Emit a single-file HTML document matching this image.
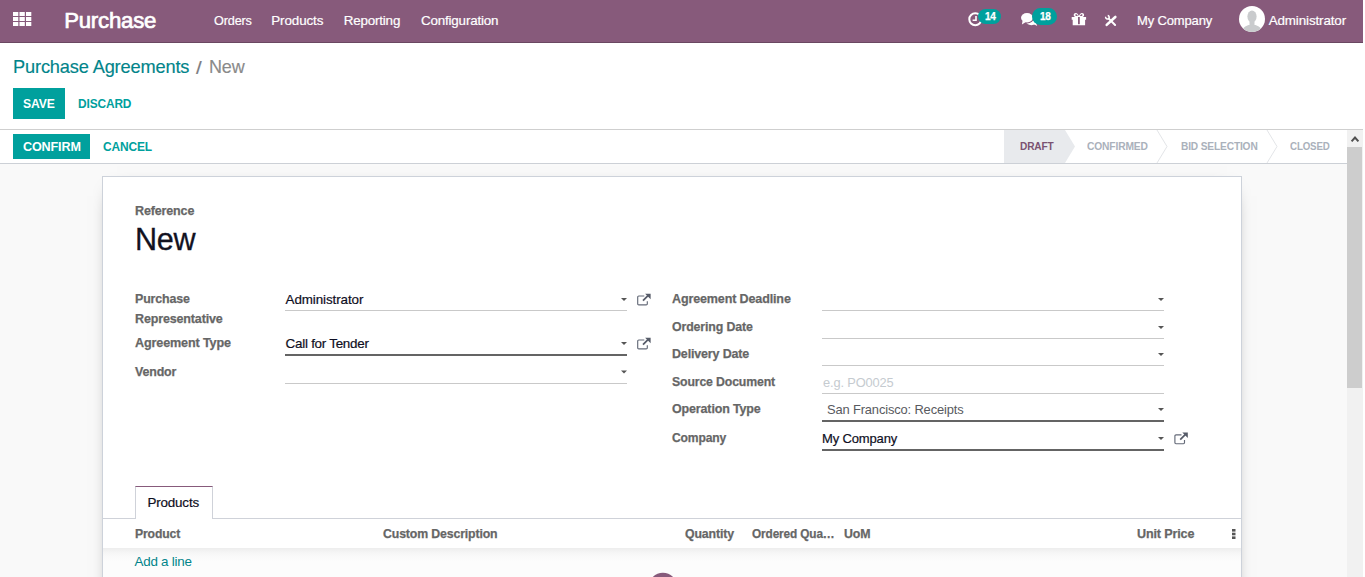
<!DOCTYPE html>
<html lang="en">
<head>
<meta charset="utf-8">
<title>Purchase Agreements - New</title>
<style>
*{box-sizing:border-box}
html,body{margin:0;padding:0;background:#fff;overflow:hidden}
body{font-family:"Liberation Sans",sans-serif;font-size:13px;color:#1f2128}
#app{position:relative;width:1363px;height:577px;overflow:hidden;background:#f9f9f9}
.t{position:absolute;white-space:nowrap;line-height:20px;margin:0;padding:0;font-weight:400;font-family:inherit;transform-origin:0 50%;display:block;text-decoration:none;cursor:default}
svg{position:absolute;display:block;overflow:visible}
/* navbar */
.navbar{position:absolute;left:0;top:0;width:1363px;height:43px;background:#875a7b;border-bottom:1px solid #6a4761}
.badge{position:absolute;background:#00a09d;border-radius:9px}
.avatar{position:absolute;left:1239px;top:6px;width:26px;height:26px;border-radius:50%;background:#fff;overflow:hidden}
/* control panel */
.cp{position:absolute;left:0;top:43px;width:1363px;height:87px;background:#fff;border-bottom:1px solid #cfcfcf}
.btn{position:absolute;background:#00a09d}
/* status bar */
.sb{position:absolute;left:0;top:130px;width:1347px;height:34px;background:#fff;border-bottom:1px solid #ccd0d6}
.st-active{position:absolute;left:1004px;top:130px;width:61px;height:33px;background:#e8eaed}
/* sheet */
.sheet{position:absolute;left:102px;top:176px;width:1140px;height:460px;background:#fff;border:1px solid #cdd2da;box-shadow:0 5px 20px -15px #000}
.ul{position:absolute;height:1px;background:#c9c9c9}
.ul.req{height:2px;background:#646464}
.tab{position:absolute;left:135px;top:486px;width:78px;height:33px;background:#fff;border:1px solid #cfd2d9;border-top:1px solid #875a7b;border-bottom:0}
.tabline{position:absolute;left:103px;top:518px;width:1138px;height:1px;background:#cfd2d9}
.thead{position:absolute;left:103px;top:519px;width:1138px;height:29px;background:#fff}
.tbody{position:absolute;left:103px;top:548px;width:1138px;height:40px;background:linear-gradient(#ededed 0,#f1f1f1 2px,#f6f6f6 5px,#fafafa 9px,#fcfcfc 13px)}
/* scrollbar */
.sbar{position:absolute;left:1347px;top:130px;width:16px;height:447px;background:#f1f1f1}
.thumb{position:absolute;left:0;top:17px;width:15px;height:241px;background:#cdcdcd}
</style>
</head>
<body>
<div id="app">

  <nav class="navbar">
    <svg style="left:12.9px;top:12px" width="19" height="14" viewBox="0 0 19 14"><g fill="#fff"><rect x="0" y="0" width="5.3" height="4"/><rect x="6.5" y="0" width="5.3" height="4"/><rect x="13" y="0" width="5.3" height="4"/><rect x="0" y="5" width="5.3" height="4"/><rect x="6.5" y="5" width="5.3" height="4"/><rect x="13" y="5" width="5.3" height="4"/><rect x="0" y="10" width="5.3" height="4"/><rect x="6.5" y="10" width="5.3" height="4"/><rect x="13" y="10" width="5.3" height="4"/></g></svg>
    <svg style="left:968px;top:12px" width="15" height="15" viewBox="0 0 15 15"><circle cx="7.3" cy="7.3" r="6" fill="none" stroke="#fff" stroke-width="2"/><path d="M8 4v4.2H4.6" fill="none" stroke="#fff" stroke-width="1.6"/></svg>
    <div class="badge" style="left:978px;top:9px;width:23px;height:15px"></div>
    <svg style="left:1021px;top:13px" width="17" height="14" viewBox="0 0 17 14"><g fill="#fff"><ellipse cx="10.4" cy="8.3" rx="5.6" ry="3.9"/><path d="M12.4 11l3.8 2.1-1.3-3.6z"/></g><ellipse cx="6" cy="4.8" rx="7" ry="5.7" fill="#875a7b"/><g fill="#fff"><ellipse cx="6" cy="4.8" rx="6" ry="4.7"/><path d="M1.6 7.5L0.9 11.4l4-2.3z"/></g></svg>
    <div class="badge" style="left:1032px;top:8px;width:25px;height:17px"></div>
    <svg style="left:1071px;top:12px" width="16" height="14" viewBox="0 0 16 14"><g fill="#fff"><path d="M0.7 5h14.4v2.8H0.7zM1.7 7.8h12.4v5.4H1.7z"/><path d="M4.8 0.9c1.5 0 2.5 1.5 3.1 3 0.6-1.5 1.6-3 3.1-3 1.3 0 2.1.9 2.1 2 0 1.3-1.1 2.1-2.3 2.1H5c-1.2 0-2.3-.8-2.3-2.1 0-1.1.8-2 2.1-2zm.3 1.4c-.5 0-.9.3-.9.8s.400.8.900.8h1.7c-.4-.9-1-1.6-1.7-1.6zm5.6 0c-.7 0-1.3.7-1.7 1.6h1.7c.5 0 .9-.3.9-.8s-.4-.8-.9-.8z" fill-rule="evenodd"/></g><rect x="7" y="5" width="1.8" height="7.2" fill="#875a7b"/></svg>
    <svg style="left:1104px;top:14px" width="14" height="14" viewBox="0 0 14 14"><g fill="none" stroke="#fff"><path d="M11.3 3L2.7 10.9" stroke-width="2.6" stroke-linecap="round"/><path d="M4.8 4.6l6.3 6.4" stroke-width="2" stroke-linecap="round"/><path d="M3.7 1.5A1.8 1.8 0 1 1 1.7 2.8" stroke-width="1.5"/></g></svg>
    <div class="avatar"><svg style="left:0;top:0" width="26" height="26" viewBox="0 0 26 26"><ellipse cx="13" cy="10.5" rx="4.6" ry="6" fill="#c9cbcd"/><path d="M3 26c.5-4.5 3.5-6 6.5-7h7c3 1 6 2.5 6.5 7z" fill="#c9cbcd"/><rect x="10.5" y="15" width="5" height="5" fill="#c9cbcd"/></svg></div>
    <a class="t" style="left:64.15px;top:10.7px;font-size:22.2px;color:#fff;-webkit-text-stroke:0.7px #fff;letter-spacing:-0.213px;">Purchase</a>
    <a class="t" style="left:213.7px;top:10.7px;font-size:13.4px;color:#fff;transform:scaleX(0.9437);-webkit-text-stroke:0.2px #fff;letter-spacing:-0.15px;">Orders</a>
    <a class="t" style="left:271.3px;top:10.7px;font-size:13.4px;color:#fff;-webkit-text-stroke:0.2px #fff;letter-spacing:-0.107px;">Products</a>
    <a class="t" style="left:343.7px;top:10.7px;font-size:13.4px;color:#fff;-webkit-text-stroke:0.2px #fff;letter-spacing:-0.177px;">Reporting</a>
    <a class="t" style="left:420.9px;top:10.7px;font-size:13.4px;color:#fff;-webkit-text-stroke:0.2px #fff;letter-spacing:-0.167px;">Configuration</a>
    <a class="t" style="left:1136.8px;top:10.7px;font-size:13.4px;color:#fff;transform:scaleX(0.9709);-webkit-text-stroke:0.2px #fff;letter-spacing:-0.15px;">My Company</a>
    <a class="t" style="left:1268.7px;top:10.7px;font-size:13.4px;color:#fff;-webkit-text-stroke:0.2px #fff;letter-spacing:-0.118px;">Administrator</a>
    <span class="t" style="left:985.12px;top:7px;font-size:10px;color:#fff;font-weight:700;-webkit-text-stroke:0.25px #fff;letter-spacing:-0.45px;">14</span>
    <span class="t" style="left:1040.12px;top:7px;font-size:10px;color:#fff;font-weight:700;-webkit-text-stroke:0.25px #fff;letter-spacing:-0.45px;">18</span>
  </nav>

  <header>
    <div class="cp"></div>
    <div class="btn" style="left:13px;top:88px;width:52px;height:31px"></div>
    <a class="t" style="left:12.88px;top:56.6px;font-size:18.5px;color:#01848a;transform:scaleX(0.9841);-webkit-text-stroke:0.15px #01848a;letter-spacing:-0.15px;">Purchase Agreements</a>
    <span class="t" style="left:196.3px;top:57.7px;font-size:18.6px;color:#7c7c80;transform:scaleX(1.1);-webkit-text-stroke:0.2px #7c7c80;">/</span>
    <span class="t" style="left:208.57px;top:56.6px;font-size:18.5px;color:#8a8a8a;transform:scaleX(0.9725);-webkit-text-stroke:0.15px #8a8a8a;letter-spacing:-0.15px;">New</span>
    <span class="t" style="left:23.1px;top:94px;font-size:13px;color:#fff;font-weight:700;transform:scaleX(0.9354);letter-spacing:-0.15px;">SAVE</span>
    <span class="t" style="left:78.4px;top:94px;font-size:13px;color:#00a09d;font-weight:700;transform:scaleX(0.9165);letter-spacing:-0.15px;">DISCARD</span>
  </header>

  <section class="statusbar">
    <div class="sb"></div>
    <div class="btn" style="left:13px;top:134px;width:77px;height:25px"></div>
    <div class="st-active"></div>
    <svg style="left:1004px;top:130px" width="343" height="33" viewBox="0 0 343 33">
    <path d="M61 0l10 16.5L61 33z" fill="#e8eaed"/>
    <path d="M153 0l10 16.5L153 33" fill="none" stroke="#e3e5e8" stroke-width="1"/>
    <path d="M263 0l10 16.5L263 33" fill="none" stroke="#e3e5e8" stroke-width="1"/>
    </svg>
    <span class="t" style="left:22.9px;top:137px;font-size:13px;color:#fff;font-weight:700;transform:scaleX(0.969);letter-spacing:-0.15px;">CONFIRM</span>
    <span class="t" style="left:102.9px;top:137px;font-size:13px;color:#00a09d;font-weight:700;transform:scaleX(0.9201);letter-spacing:-0.15px;">CANCEL</span>
    <span class="t" style="left:1020.2px;top:135.9px;font-size:10.8px;color:#7b5272;font-weight:700;transform:scaleX(0.9372);letter-spacing:-0.15px;">DRAFT</span>
    <span class="t" style="left:1086.9px;top:135.9px;font-size:10.8px;color:#aab1bb;font-weight:700;transform:scaleX(0.9491);letter-spacing:-0.15px;">CONFIRMED</span>
    <span class="t" style="left:1180.7px;top:135.9px;font-size:10.8px;color:#aab1bb;font-weight:700;transform:scaleX(0.9403);letter-spacing:-0.15px;">BID SELECTION</span>
    <span class="t" style="left:1289.8px;top:135.9px;font-size:10.8px;color:#aab1bb;font-weight:700;transform:scaleX(0.9);letter-spacing:-0.15px;">CLOSED</span>
  </section>

  <main>
    <div class="sheet"></div>
    <div class="ul" style="left:285px;top:310px;width:342px"></div>
    <div class="ul req" style="left:285px;top:354px;width:342px"></div>
    <div class="ul" style="left:285px;top:383px;width:342px"></div>
    <div class="ul" style="left:822px;top:310px;width:342px"></div>
    <div class="ul" style="left:822px;top:338px;width:342px"></div>
    <div class="ul" style="left:822px;top:365px;width:342px"></div>
    <div class="ul" style="left:822px;top:393px;width:342px"></div>
    <div class="ul req" style="left:822px;top:420px;width:342px"></div>
    <div class="ul req" style="left:822px;top:449px;width:342px"></div>
    <div class="tabline"></div>
    <div class="tab"></div>
    <div class="thead"></div>
    <div class="tbody"></div>
    <svg style="left:0;top:0" width="1363" height="577" viewBox="0 0 1363 577">
    <g fill="#555">
      <path d="M621 298h6l-3 3z"/><path d="M621 342h6l-3 3z"/><path d="M621 370.5h6l-3 3z"/>
      <path d="M1158 298h6l-3 3z"/><path d="M1158 326h6l-3 3z"/><path d="M1158 353h6l-3 3z"/><path d="M1158 408h6l-3 3z"/><path d="M1158 437h6l-3 3z"/>
    </g>
    <g transform="translate(637.7 296)" stroke="#646a78" fill="none" stroke-width="1.15"><path d="M9.6 5.2v2.5a1.1 1.1 0 0 1-1.1 1.1H1.1A1.1 1.1 0 0 1 0 7.7V1.1A1.1 1.1 0 0 1 1.1 0h5.5"/><path d="M5.3 4.7L10.8 -0.8" stroke="#565b68" stroke-width="1.7"/><path d="M7.4 -2.3h5.5v5.5z" fill="#565b68" stroke="none"/></g><g transform="translate(637.7 340)" stroke="#646a78" fill="none" stroke-width="1.15"><path d="M9.6 5.2v2.5a1.1 1.1 0 0 1-1.1 1.1H1.1A1.1 1.1 0 0 1 0 7.7V1.1A1.1 1.1 0 0 1 1.1 0h5.5"/><path d="M5.3 4.7L10.8 -0.8" stroke="#565b68" stroke-width="1.7"/><path d="M7.4 -2.3h5.5v5.5z" fill="#565b68" stroke="none"/></g><g transform="translate(1174.9 434.9)" stroke="#646a78" fill="none" stroke-width="1.15"><path d="M9.6 5.2v2.5a1.1 1.1 0 0 1-1.1 1.1H1.1A1.1 1.1 0 0 1 0 7.7V1.1A1.1 1.1 0 0 1 1.1 0h5.5"/><path d="M5.3 4.7L10.8 -0.8" stroke="#565b68" stroke-width="1.7"/><path d="M7.4 -2.3h5.5v5.5z" fill="#565b68" stroke="none"/></g>
    <g fill="#555"><rect x="1232" y="529" width="3.5" height="2.6"/><rect x="1232" y="532.7" width="3.5" height="2.6"/><rect x="1232" y="536.4" width="3.5" height="2.6"/></g>
    <circle cx="662.9" cy="586.7" r="14" fill="#875a7b"/>
    </svg>
    <label class="t" style="left:134.72px;top:200.9px;font-size:13px;color:#666666;font-weight:700;transform:scaleX(0.9628);-webkit-text-stroke:0.25px #666666;letter-spacing:-0.15px;">Reference</label>
    <h1 class="t" style="left:134.95px;top:228.9px;font-size:30.6px;color:#12121f;-webkit-text-stroke:0.3px #12121f;letter-spacing:-0.254px;">New</h1>
    <label class="t" style="left:134.72px;top:289.3px;font-size:13px;color:#666666;font-weight:700;transform:scaleX(0.9563);-webkit-text-stroke:0.25px #666666;letter-spacing:-0.15px;">Purchase</label>
    <label class="t" style="left:134.72px;top:309.1px;font-size:13px;color:#666666;font-weight:700;transform:scaleX(0.9618);-webkit-text-stroke:0.25px #666666;letter-spacing:-0.15px;">Representative</label>
    <label class="t" style="left:134.72px;top:333.1px;font-size:13px;color:#666666;font-weight:700;transform:scaleX(0.97);-webkit-text-stroke:0.25px #666666;letter-spacing:-0.15px;">Agreement Type</label>
    <label class="t" style="left:134.72px;top:361.7px;font-size:13px;color:#666666;font-weight:700;transform:scaleX(0.9559);-webkit-text-stroke:0.25px #666666;letter-spacing:-0.15px;">Vendor</label>
    <span class="t" style="left:285.6px;top:289.8px;font-size:13.4px;color:#0e0e22;-webkit-text-stroke:0.2px #0e0e22;letter-spacing:-0.093px;">Administrator</span>
    <span class="t" style="left:285.6px;top:333.7px;font-size:13.4px;color:#0e0e22;-webkit-text-stroke:0.2px #0e0e22;letter-spacing:-0.251px;">Call for Tender</span>
    <label class="t" style="left:671.83px;top:289.3px;font-size:13px;color:#666666;font-weight:700;transform:scaleX(0.9652);-webkit-text-stroke:0.25px #666666;letter-spacing:-0.15px;">Agreement Deadline</label>
    <label class="t" style="left:671.83px;top:317.1px;font-size:13px;color:#666666;font-weight:700;transform:scaleX(0.9515);-webkit-text-stroke:0.25px #666666;letter-spacing:-0.15px;">Ordering Date</label>
    <label class="t" style="left:671.83px;top:343.8px;font-size:13px;color:#666666;font-weight:700;transform:scaleX(0.9589);-webkit-text-stroke:0.25px #666666;letter-spacing:-0.15px;">Delivery Date</label>
    <label class="t" style="left:671.83px;top:371.5px;font-size:13px;color:#666666;font-weight:700;transform:scaleX(0.9448);-webkit-text-stroke:0.25px #666666;letter-spacing:-0.15px;">Source Document</label>
    <label class="t" style="left:671.83px;top:399px;font-size:13px;color:#666666;font-weight:700;transform:scaleX(0.9604);-webkit-text-stroke:0.25px #666666;letter-spacing:-0.15px;">Operation Type</label>
    <label class="t" style="left:671.83px;top:427.8px;font-size:13px;color:#666666;font-weight:700;transform:scaleX(0.9315);-webkit-text-stroke:0.25px #666666;letter-spacing:-0.15px;">Company</label>
    <span class="t" style="left:822.8px;top:373.2px;font-size:13.4px;color:#c5cbd0;transform:scaleX(0.9584);letter-spacing:-0.15px;">e.g. PO0025</span>
    <span class="t" style="left:826.8px;top:400px;font-size:13.4px;color:#585a60;transform:scaleX(0.9632);letter-spacing:-0.15px;">San Francisco: Receipts</span>
    <span class="t" style="left:822.2px;top:428.8px;font-size:13.4px;color:#0e0e22;transform:scaleX(0.9709);-webkit-text-stroke:0.2px #0e0e22;letter-spacing:-0.15px;">My Company</span>
    <a class="t" style="left:147.4px;top:492.7px;font-size:13.4px;color:#0e0e22;-webkit-text-stroke:0.2px #0e0e22;letter-spacing:-0.15px;">Products</a>
    <span class="t" style="left:134.72px;top:523.7px;font-size:13px;color:#666666;font-weight:700;transform:scaleX(0.94);-webkit-text-stroke:0.25px #666666;letter-spacing:-0.15px;">Product</span>
    <span class="t" style="left:383.12px;top:523.7px;font-size:13px;color:#666666;font-weight:700;transform:scaleX(0.9474);-webkit-text-stroke:0.25px #666666;letter-spacing:-0.15px;">Custom Description</span>
    <span class="t" style="left:684.92px;top:523.7px;font-size:13px;color:#666666;font-weight:700;transform:scaleX(0.9486);-webkit-text-stroke:0.25px #666666;letter-spacing:-0.15px;">Quantity</span>
    <span class="t" style="left:752.02px;top:523.7px;font-size:13px;color:#666666;font-weight:700;transform:scaleX(0.9102);-webkit-text-stroke:0.25px #666666;letter-spacing:-0.15px;">Ordered Qua…</span>
    <span class="t" style="left:843.83px;top:523.7px;font-size:13px;color:#666666;font-weight:700;transform:scaleX(0.949);-webkit-text-stroke:0.25px #666666;letter-spacing:-0.15px;">UoM</span>
    <span class="t" style="left:1136.92px;top:523.7px;font-size:13px;color:#666666;font-weight:700;transform:scaleX(0.9669);-webkit-text-stroke:0.25px #666666;letter-spacing:-0.15px;">Unit Price</span>
    <a class="t" style="left:134.6px;top:551.5px;font-size:13.4px;color:#01848a;letter-spacing:-0.257px;">Add a line</a>
  </main>

  <aside class="sbar"><div class="thumb"></div>
    <svg style="left:3.6px;top:6px" width="8" height="6" viewBox="0 0 8 6"><path d="M0.6 5.4L4 1.6l3.4 3.8" fill="none" stroke="#505050" stroke-width="2"/></svg>
  </aside>
</div>
</body>
</html>
